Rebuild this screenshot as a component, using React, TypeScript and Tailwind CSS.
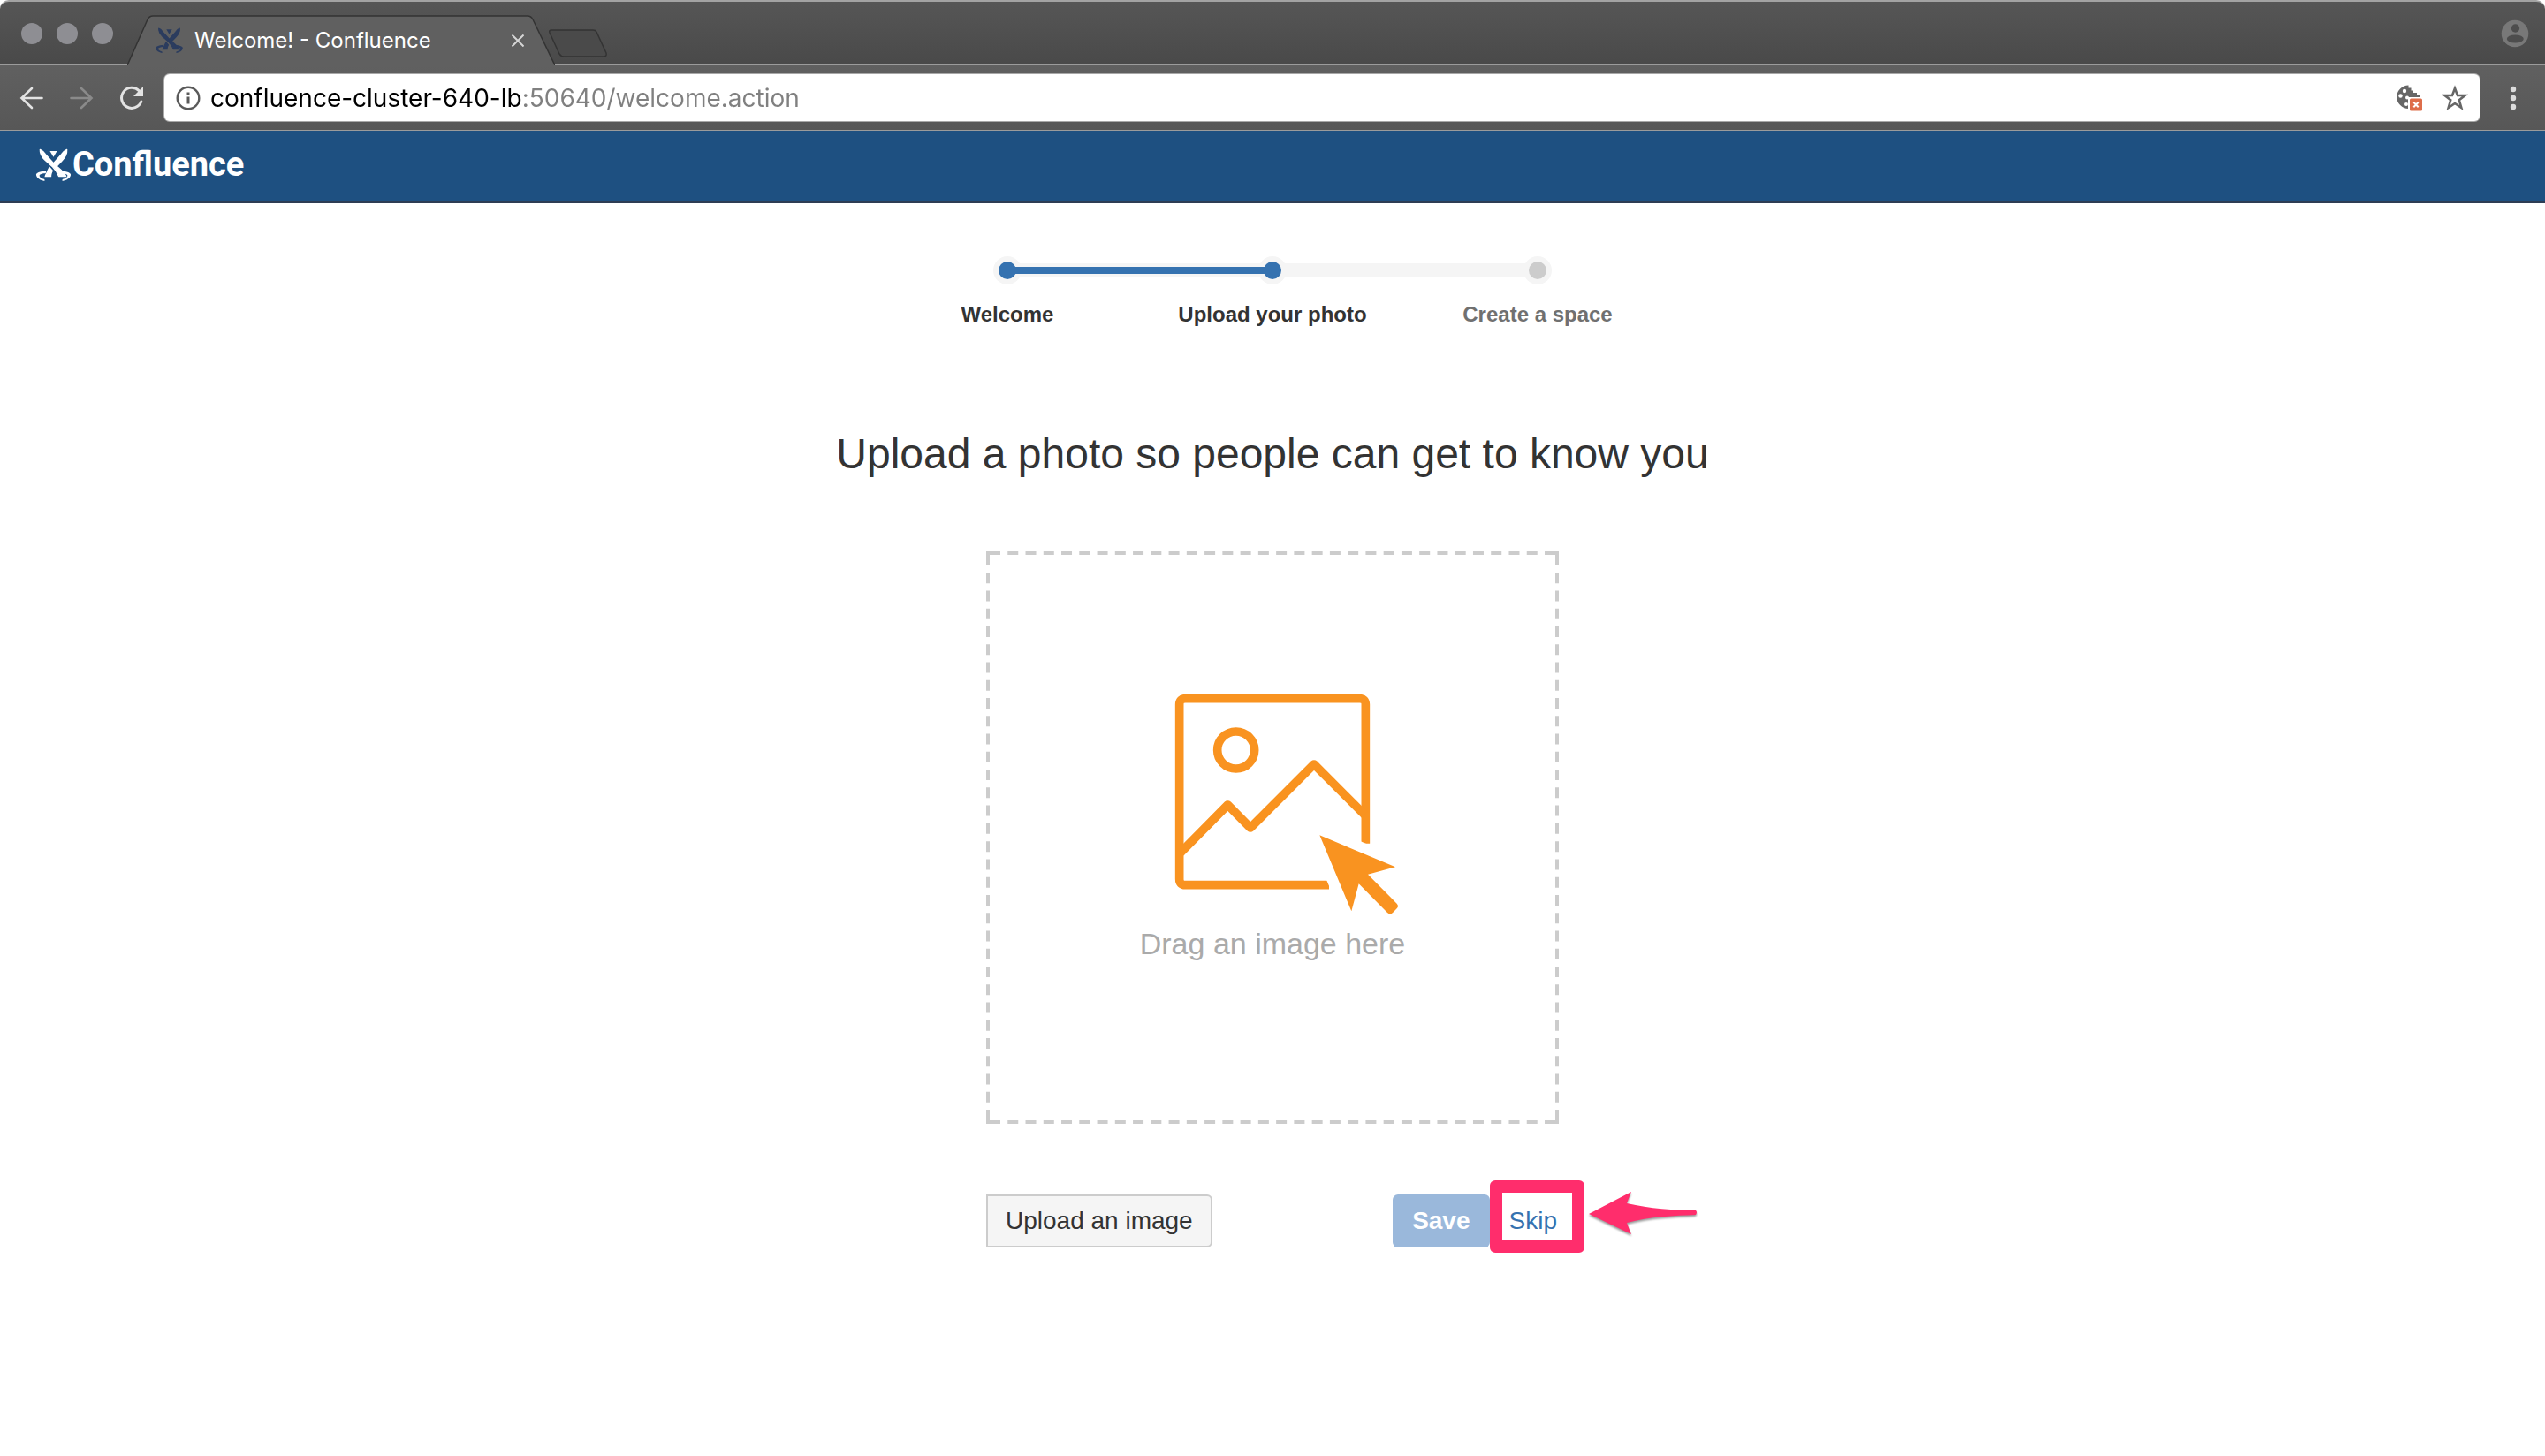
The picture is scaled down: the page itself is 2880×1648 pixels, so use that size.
import React from "react";

const steps = [
  { label: "Welcome", reached: true },
  { label: "Upload your photo", reached: true },
  { label: "Create a space", reached: false },
];

function AtlassianMark({ className }: { className: string }) {
  return (
    <svg viewBox="30 24 120 110" className={className} fill="currentColor" aria-hidden="true">
      <g stroke="currentColor" strokeWidth="4" strokeLinejoin="round">
        <path d="M45 28C53 31 58 37 63 44L92 76C106 90 124 100 132 118H108C104 106 97 96 87 86L61 63C50 52 44 42 45 28Z" />
        <path d="M135 28C127 31 122 37 117 44L86 79L97 88L119 65C130 54 136 42 135 28Z" />
      </g>
      <path d="M76 84L89 99C85 105 83 112 83 120H60C62 109 67 105 69 98Z" />
      <path d="M78 33H102L90 53Z" />
      <path d="M66 99C44 101 30 106 32 114C34 125 46 131 60 134V128C49 126 42 120 43 115C44 110 54 108 64 107Z" />
      <path d="M114 99C136 101 150 106 148 114C146 125 134 131 120 134V128C131 126 138 120 137 115C136 110 126 108 116 107Z" />
    </svg>
  );
}

function TabStrip() {
  return (
    <div className="flex h-[74px] items-end rounded-t-[10px] border-t-2 border-[#a3a3a3] bg-gradient-to-b from-[#565656] to-[#494949] shadow-[inset_0_-1px_0_#9b9b9b]">
      <div className="flex w-[144px] shrink-0 gap-[16px] self-center pl-[24px]">
        <span className="size-[24px] rounded-full bg-[#8e8e93]" />
        <span className="size-[24px] rounded-full bg-[#8e8e93]" />
        <span className="size-[24px] rounded-full bg-[#8e8e93]" />
      </div>
      <div className="relative h-[57px] w-[484px] shrink-0">
        <svg viewBox="0 0 484 57" className="absolute inset-0 size-full" aria-hidden="true">
          <path d="M0 57L23 5Q25 1 29 1H453Q457 1 459 5L484 57Z" fill="#606060" />
          <path d="M0 57L23 5Q25 1 29 1H453Q457 1 459 5L484 57" fill="none" stroke="#333" strokeWidth="1.5" />
        </svg>
        <div className="relative flex h-full items-center pr-[35px] pl-[31px]">
          <AtlassianMark className="h-[29px] w-[33px] text-[#2b3c5e]" />
          <span className="ml-[12px] flex-1 text-[24px] leading-[32px] text-white">Welcome! - Confluence</span>
          <button type="button" aria-label="Close tab" className="text-[#d6d6d6]">
            <svg viewBox="0 0 14 14" className="size-[14px]" fill="none" stroke="currentColor" strokeWidth="2">
              <path d="M0.500 0.500L13.500 13.500M13.500 0.500L0.500 13.500" />
            </svg>
          </button>
        </div>
      </div>
      <button type="button" aria-label="New tab" className="-ml-[8px] pb-[8px]">
        <svg viewBox="0 0 68 34" className="h-[34px] w-[68px]" aria-hidden="true">
          <path d="M4 2H51Q54 2 55 4L66 28Q67 32 63 32H18Q15 32 13 29L2 5Q1 2 4 2Z" fill="#4a4a4a" stroke="#333" strokeWidth="1.5" />
        </svg>
      </button>
      <button type="button" aria-label="Profile" className="mr-[18px] ml-auto self-center text-[#787878]">
        <svg viewBox="0 0 32 32" className="size-[32px]" aria-hidden="true">
          <circle cx="16" cy="16" r="15.300" fill="currentColor" />
          <circle cx="16.500" cy="10" r="4.700" fill="#4d4d4d" />
          <ellipse cx="16.300" cy="22" rx="9.500" ry="4.600" fill="#4d4d4d" />
        </svg>
      </button>
    </div>
  );
}

function Toolbar() {
  return (
    <div className="flex h-[74px] items-center border-b border-[#9b9b9b] bg-gradient-to-b from-[#606060] to-[#575757] pr-[26px] pl-[22px]">
      <button type="button" aria-label="Back" className="text-[#e3e3e3]">
        <svg viewBox="0 0 28 28" className="size-[28px]" fill="none" stroke="currentColor" strokeWidth="2.600" strokeLinecap="round">
          <path d="M25.500 14H3M14 3L2.500 14L14 25" />
        </svg>
      </button>
      <button type="button" aria-label="Forward" className="ml-[28px] text-[#8a8a8a]">
        <svg viewBox="0 0 28 28" className="size-[28px]" fill="none" stroke="currentColor" strokeWidth="2.600" strokeLinecap="round">
          <path d="M2.500 14H25M14 3L25.500 14L14 25" />
        </svg>
      </button>
      <button type="button" aria-label="Reload" className="ml-[28px] text-[#e3e3e3]">
        <svg viewBox="0 0 30 30" className="size-[30px]" aria-hidden="true">
          <path d="M23.300 6.800A11.500 11.500 0 1 0 25.800 19" fill="none" stroke="currentColor" strokeWidth="3" strokeLinecap="round" />
          <path d="M28 2V13H17Z" fill="currentColor" />
        </svg>
      </button>
      <div className="ml-[22px] flex h-[53px] flex-1 items-center rounded-[6px] bg-white px-[13px] shadow-[0_0_0_1px_#a8a8a8]">
        <svg viewBox="0 0 28 28" className="size-[28px]" aria-hidden="true">
          <circle cx="14" cy="14" r="12.300" fill="none" stroke="#5a5a5a" strokeWidth="2.400" />
          <path d="M12.500 7.500h3v3h-3zM12.500 12.500h3v8h-3z" fill="#5a5a5a" />
        </svg>
        <input
          type="text"
          aria-label="Address"
          defaultValue="confluence-cluster-640-lb:50640/welcome.action"
          className="ml-[11px] flex-1 bg-[linear-gradient(to_right,#000_354px,#808080_354px)] bg-clip-text text-[28px] leading-[36px] text-transparent outline-none"
        />
        <button type="button" aria-label="Cookies blocked">
          <svg viewBox="0 0 30 30" className="size-[30px]" aria-hidden="true">
            <path d="M14.500 0.500A13 13 0 1 0 14.500 27L27 14V11.500H24V9H20V6.500H17.500V3.500H14.500Z" fill="#666" />
            <g fill="#fff">
              <circle cx="10" cy="7" r="2.200" />
              <circle cx="5.500" cy="12.500" r="2.200" />
              <circle cx="13" cy="14.500" r="2" />
              <circle cx="12" cy="22" r="2" />
              <path d="M14 14H30V30H14Z" />
            </g>
            <rect x="16" y="15.500" width="14" height="14" rx="1.500" fill="#de6e4b" />
            <path d="M20.300 19.800L25.700 25.200M25.700 19.800L20.300 25.200" stroke="#fff" strokeWidth="2" />
          </svg>
        </button>
        <button type="button" aria-label="Bookmark this page" className="ml-[22px]">
          <svg viewBox="0 0 30 30" className="size-[30px]" fill="none" stroke="#666" strokeWidth="2.600">
            <path d="M15 4L18 12H26.500L19.800 17.300L22.300 26L15 21L7.700 26L10.200 17.300L3.500 12H12Z" />
          </svg>
        </button>
      </div>
      <button type="button" aria-label="Menu" className="ml-[28px] text-[#dcdcdc]">
        <svg viewBox="0 0 20 28" className="h-[28px] w-[20px]" fill="currentColor">
          <circle cx="10" cy="4" r="3.200" />
          <circle cx="10" cy="14" r="3.200" />
          <circle cx="10" cy="24" r="3.200" />
        </svg>
      </button>
    </div>
  );
}

function Progress() {
  return (
    <ol className="grid w-[900px] grid-cols-3">
      {steps.map((step, i) => (
        <li key={step.label} className="relative flex flex-col items-center">
          {i > 0 && <span className="absolute top-[8px] right-1/2 h-[16px] w-full bg-[#f5f5f5]" />}
          {i > 0 && step.reached && <span className="absolute top-[12px] right-1/2 z-20 h-[8px] w-full bg-[#3572b0]" />}
          <span className="z-10 size-[32px] rounded-full bg-[#f5f5f5] p-[6px]">
            <span className={step.reached ? "block size-[20px] rounded-full bg-[#3572b0]" : "block size-[20px] rounded-full bg-[#ccc]"} />
          </span>
          <span className={step.reached ? "mt-[18px] text-[24px] leading-[32px] font-bold text-[#333]" : "mt-[18px] text-[24px] leading-[32px] font-bold text-[#707070]"}>
            {step.label}
          </span>
        </li>
      ))}
    </ol>
  );
}

function DropZone() {
  return (
    <div className="relative mt-[82px] flex h-[648px] w-full flex-col items-center pt-[162px]">
      <svg viewBox="0 0 648 648" className="absolute inset-0 size-full" fill="none" stroke="#ccc" strokeWidth="4" aria-hidden="true">
        <path strokeDasharray="12 8.258" d="M4 2H644M4 646H644M2 4V644M646 4V644" />
        <path d="M0 2H4M644 2H648M0 646H4M644 646H648" />
      </svg>
      <svg viewBox="54 78 852 750" className="h-[250px] w-[284px]" aria-hidden="true">
        <g fill="none" stroke="#f99320" strokeWidth="29" strokeLinejoin="round">
          <path d="M672 725H184Q164 725 164 705V112Q164 92 184 92H776Q796 92 796 112V584" />
          <path d="M168 615L328 453L405 531L621 315L793 487" />
          <circle cx="356" cy="267" r="63" />
        </g>
        <path d="M660 700L682 752H700V700ZM770 573L820 594V610H770Z" fill="#fff" />
        <path d="M640 556L897 664L804 689L902 788Q910 797 902 805L889 818Q880 827 870 819L773 721L748 814Z" fill="#f99320" />
      </svg>
      <p className="mt-[12px] text-[34px] leading-[40px] text-[#aaa]">Drag an image here</p>
    </div>
  );
}

function Actions() {
  return (
    <div className="mt-[80px] flex w-full items-center justify-between">
      <button type="button" className="h-[60px] rounded-r-[6px] border-2 border-[#ccc] bg-[#f5f5f5] px-[20px] text-[28px] leading-[36px] text-[#333]">
        Upload an image
      </button>
      <div className="-mr-[20px] flex items-center">
        <button type="button" className="h-[60px] rounded-[6px] bg-[#9ab8db] px-[22px] text-[28px] leading-[36px] font-bold text-white">
          Save
        </button>
        <div className="relative">
          <a href="#skip" className="block px-[22px] py-[12px] text-[28px] leading-[36px] text-[#3572b0]">
            Skip
          </a>
          <span className="pointer-events-none absolute -top-[16px] left-0 h-[82px] w-[107px] rounded-[6px] border-[14px] border-[#ff2d6c]" />
          <svg viewBox="0 0 126 52" className="pointer-events-none absolute -top-[4px] left-[111px] h-[52px] w-[126px] drop-shadow-[0_2px_1px_#00000066]" aria-hidden="true">
            <path d="M1 26L49 1Q46 8 44 14C70 20 98 22 122 22Q124 24 122 27C98 28 70 29 44 36Q46 42 49 49Z" fill="#ff2d6c" />
          </svg>
        </div>
      </div>
    </div>
  );
}

export default function App() {
  return (
    <div className="min-h-screen bg-white">
      <div className="font-['Inter',sans-serif]">
        <TabStrip />
        <Toolbar />
      </div>
      <header className="flex h-[82px] items-center border-b-2 border-[#2e3d54] bg-[#1e5081] pb-[4px] pl-[40px] text-white">
        <AtlassianMark className="h-[37px] w-[41px]" />
        <span className="ml-[1px] font-['Roboto',sans-serif] text-[38px] leading-[48px] font-bold">Confluence</span>
      </header>
      <main className="flex flex-col items-center pt-[60px] font-['Liberation_Sans',Arial,sans-serif]">
        <Progress />
        <h1 className="mt-[114px] text-[48px] leading-[56px] text-[#333]">Upload a photo so people can get to know you</h1>
        <div className="flex w-[648px] flex-col">
          <DropZone />
          <Actions />
        </div>
      </main>
    </div>
  );
}
